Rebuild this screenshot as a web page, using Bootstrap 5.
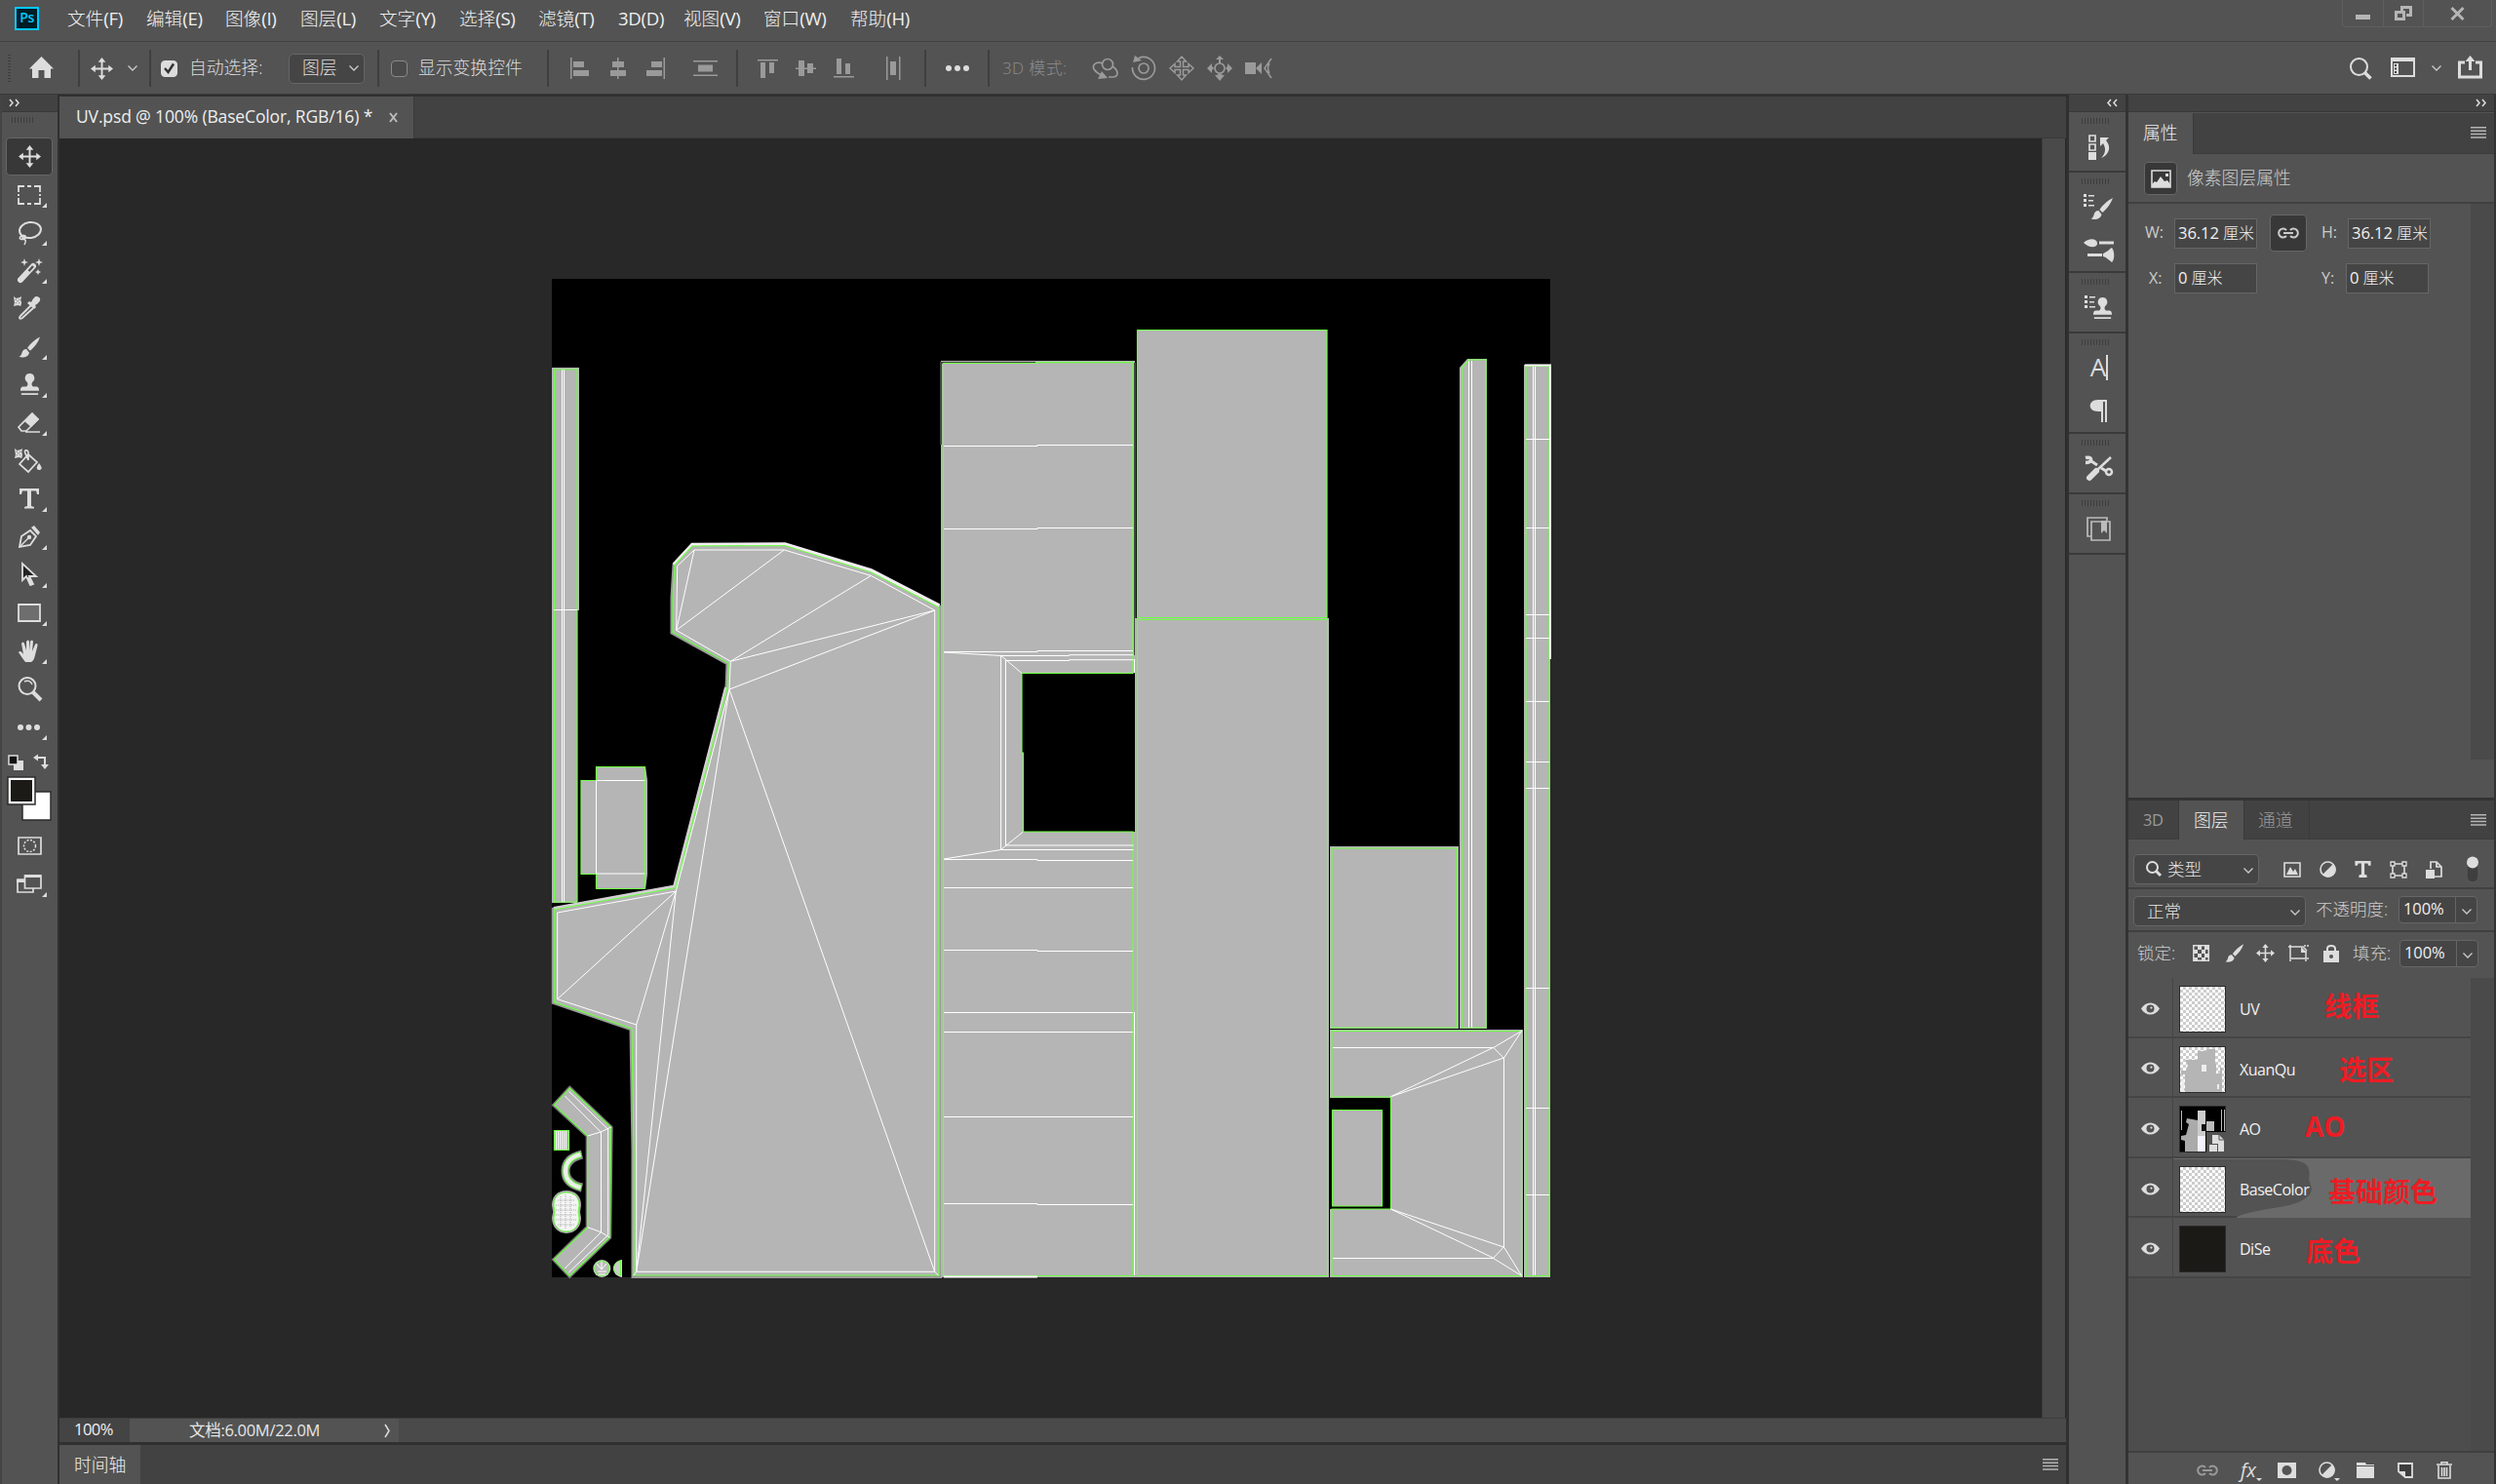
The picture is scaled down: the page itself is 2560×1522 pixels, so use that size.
<!DOCTYPE html>
<html lang="zh-CN">
<head>
<meta charset="utf-8">
<title>UV.psd</title>
<link href="https://cdn.jsdelivr.net/npm/bootstrap@5.3.0/dist/css/bootstrap.min.css" rel="stylesheet">
<style>
body{width:2560px;height:1522px;overflow:hidden;background:#535353;color:#e6e6e6;font:400 18px/1.2 "Open Sans","Noto Sans CJK SC",sans-serif}
svg{display:block;flex:none;overflow:visible;fill:#ddd}
.ln{fill:none;stroke:#ddd}
.ln:not([stroke-width]){stroke-width:2}
.menus{height:43px;border-bottom:1px solid #404040;padding-left:15px}
.menu-grid{display:grid;grid-template-columns:81px 81px 77px 81px 82px 81px 82px 67px 82px 89px 80px;margin-left:24px;padding-left:5px;font-size:18.6px;line-height:38px;white-space:nowrap;color:#f0f0f0;font-weight:300}
.menu-grid i{font-style:normal;font-weight:400;letter-spacing:-.3px}
.pslogo{width:25px;height:24px;margin-top:7px;border:2px solid #00c8ff;background:#001d26;color:#00c8ff;font-size:14px;font-weight:600;line-height:17px;letter-spacing:-.5px;text-align:center}
.winbtns{height:28px;margin-right:4px;border:1px solid #5f5f5f;border-top:0;border-radius:0 0 4px 4px}
.winbtns>span{display:flex;justify-content:center;align-items:center;width:41px}
.winbtns>span+span{border-left:1px solid #5f5f5f}
.winbtns>span:last-child{width:70px}
.opts{height:54px;border-bottom:1px solid #3a3a3a}
.ogrp{display:flex;align-items:center;height:54px;position:relative;font-size:17.8px;color:#ddd;font-weight:300;white-space:nowrap}
.ogrp::after{content:"";position:absolute;right:0;top:8px;height:38px;width:2px;background:#3f3f3f}
.ogrp.last::after{display:none}
.dim svg{fill:#9a9a9a}.dim .ln{stroke:#9a9a9a}
.psel{display:flex;align-items:center;justify-content:space-between;background:#454545;border:1px solid #666;border-radius:5px}
.cb{width:17px;height:17px;border-radius:4px;border:1.5px solid #8a8a8a;background:#4b4b4b}
.cb.on{background:#ddd;border-color:#ddd}
.main{height:1425px}
.tools{width:59px;border-left:2px solid #444;background:#535353}
.hd{height:18px;background:#424242;border-bottom:1px solid #383838}
.grip{height:6px;width:28px;background:repeating-linear-gradient(90deg,#3e3e3e 0 1px,transparent 1px 3px)}
.tool{height:39px;width:48px;display:flex;align-items:center;justify-content:center;position:relative;border:1px solid transparent;border-radius:4px}
.tool.on{background:#383838;border-color:#666}
.tool.more::after{content:"";position:absolute;right:5px;bottom:5px;border-left:5px solid transparent;border-bottom:5px solid #ddd}
.doccol{width:2063px;border-left:2px solid #303030;border-right:3px solid #303030}
.tabs{height:45px;background:#424242;border-top:2px solid #303030;border-bottom:1px solid #393939}
.doctab{width:364px;padding-left:17px;height:43px;background:#535353;border-right:1px solid #3a3a3a;font-size:17.5px;line-height:41px;letter-spacing:-.14px;white-space:nowrap;color:#eee}
.stage{height:1312px;background:#282828}
.paper{margin:144px 0 0 505px;width:1024px;height:1024px}
.vbar{width:24px;background:#4a4a4a;border-left:1px solid #3c3c3c}
.status{height:27px;background:#4a4a4a;border-top:1px solid #3c3c3c;border-bottom:2px solid #303030;font-size:16.5px;line-height:22px}
.tl{height:41px;background:#424242;border-top:1px solid #303030}
.dock{width:61px;border-right:3px solid #333}
.dgrp{border-bottom:2px solid #3a3a3a;display:flex;flex-direction:column;align-items:center;padding:6px 0 0 4px}
.dgrp .cell{height:43px;display:flex;align-items:center}
.dgrp .grip{margin-left:-8px}
.pan{width:377px;border-right:2px solid #333}
.ptabs{height:42px;background:#424242;border-bottom:1px solid #3c3c3c;line-height:40px;font-size:17.8px;color:#9a9a9a;font-weight:300}
.ptabs>span{border-right:1px solid #3a3a3a}
.ptabs .act{background:#535353;color:#f0f0f0;height:42px}
.inp{height:31px;border:1px solid #666;background:#454545;line-height:27px;padding-left:3px;font-size:16.6px;color:#f0f0f0;width:85px;white-space:nowrap;letter-spacing:-.1px}
.inp i{font-style:normal;font-weight:300;font-size:16px}
.lb{color:#ccc;font-size:16px}
.boxbtn{background:#383838;border:1px solid #666;border-radius:4px;display:flex;align-items:center;justify-content:center}
.combo{width:81px;height:28px;border:1px solid #666;border-radius:4px;background:#454545;font-size:16.5px;line-height:24px;display:flex;color:#f0f0f0;letter-spacing:-.1px}
.combo b{font-weight:400;width:58px;padding-left:4px;border-right:1px solid #666}
.combo svg{margin:12px 0 0 6px}
.lrow{height:61.6px;border-bottom:2px solid #454545;font-size:16px;letter-spacing:-.5px;color:#f0f0f0;background:#535353}
.picked{position:relative}
.picked>*{z-index:1}
.picked>.paint{position:absolute;z-index:0;left:45px;top:0}
.eyec{width:46px;padding-top:3px;border-right:1px solid #454545;display:flex;justify-content:center;align-items:center}
.thumb{width:48px;height:48px;border:1px solid #2b2b2b;margin:8px 14px 0 6px}
.lname{line-height:64px;white-space:nowrap}
.red{color:#ed1c24;font-size:28px;font-weight:700;letter-spacing:0;white-space:nowrap;line-height:59px}
.g{fill:#b5b5b5;stroke:#6fff45;stroke-width:1.2}
.h{fill:#b5b5b5;stroke:none}
.w{fill:none;stroke:#fff;stroke-width:1}
</style>
<script src="https://cdn.jsdelivr.net/npm/bootstrap@5.3.0/dist/js/bootstrap.bundle.min.js"></script>
</head>
<body>
<svg width="0" height="0" class="position-absolute"><defs>
<symbol id="chev" viewBox="0 0 10 6"><path d="M.5.5 5 5 9.500.5" fill="none" stroke="#ccc" stroke-width="1.3"/></symbol>
<symbol id="mv" viewBox="0 0 24 24"><path d="M11 5h2v6h6V8l5 4-5 4v-3h-6v6h3l-4 5-4-5h3v-6H5v3l-5-4 5-4v3h6V5H8l4-5 4 5z"/></symbol>
<symbol id="brush" viewBox="0 0 24 24"><path d="M23 1C17 4 12 9 9.500 13l3 3C17 12 21 7 23 1zM8.500 14c-3 0-4.500 2-5 4.500-.4 2-1.500 3-3 4 4 1.200 10 .5 11-4.500z"/></symbol>
<symbol id="stamp" viewBox="0 0 24 24"><path d="M12 0a5 5 0 0 0-3 9c1.500 1.500 1 4-.5 5H5c-2 0-3 1.500-3 4.500h20c0-3-1-4.500-3-4.500h-3.500c-1.500-1-2-3.500-.5-5A5 5 0 0 0 12 0zM3 21h18v2H3z"/></symbol>
<symbol id="lst" viewBox="0 0 12 14"><path d="M0 0h3v3H0zM0 5h3v3H0zM0 10h3v3H0zM5 1h6v1.500H5zM5 6h5v1.500H5zM5 11h6v1.500H5z"/></symbol>
<symbol id="burger" viewBox="0 0 16 12"><path d="M0 0h16v1.500H0zM0 3.400h16v1.500H0zM0 6.800h16v1.500H0zM0 10.200h16v1.500H0z" fill="#b5b5b5"/></symbol>
<symbol id="eye" viewBox="0 0 20 13"><path d="M0 6.500C5-2 15-2 20 6.500 15 15 5 15 0 6.500z"/><circle cx="10" cy="6.500" r="4.200" fill="#535353"/><circle cx="11" cy="5.500" r="1.200"/></symbol>
<symbol id="half" viewBox="0 0 17 17"><circle cx="8.500" cy="8.500" r="7.500" fill="none" stroke="#ddd" stroke-width="1.600"/><path d="M14 3A7.800 7.800 0 1 1 3 14z"/></symbol>
<symbol id="link" viewBox="0 0 22 12"><path d="M9 3a4.500 4.500 0 1 0 0 6M13 3a4.500 4.500 0 1 1 0 6M6 6h10" fill="none" stroke="currentColor" stroke-width="2"/></symbol>
<symbol id="splash" viewBox="0 0 10 12"><path d="M0 0l3 2 4-1 2-1-1 4 1 3-1 4-3-1-5 1 1-4z"/><path d="M2 3h1v1H2zM4 5h1v1H4zM6 3h1v1H6zM2 7h1v1H2zM6 7h1v1H6z" fill="#444"/></symbol>
<pattern id="chk" width="6" height="6" patternUnits="userSpaceOnUse"><path fill="#fff" d="M0 0h6v6H0z"/><path fill="#ccc" d="M3 0h3v3H3zM0 3h3v3H0z"/></pattern>
</defs></svg>

<header class="menus d-flex">
 <div class="pslogo">Ps</div>
 <nav class="menu-grid me-auto"><span>文件<i>(F)</i></span><span>编辑<i>(E)</i></span><span>图像<i>(I)</i></span><span>图层<i>(L)</i></span><span>文字<i>(Y)</i></span><span>选择<i>(S)</i></span><span>滤镜<i>(T)</i></span><span><i>3D(D)</i></span><span>视图<i>(V)</i></span><span>窗口<i>(W)</i></span><span>帮助<i>(H)</i></span></nav>
 <div class="winbtns d-flex"><span><svg width="15" height="15"><path fill="#b5b5b5" d="M0 9h15v5H0z"/></svg></span><span><svg width="18" height="15"><g fill="none" stroke="#b5b5b5" stroke-width="3"><path d="M7.500 6V1.500h9v8H12M1.500 6.500h8v7h-8z"/></g></svg></span><span><svg width="15" height="12"><path d="M1.500 0 13.500 12M13.500 0 1.500 12" stroke="#b5b5b5" stroke-width="3"/></svg></span></div>
</header>

<section class="opts d-flex">
 <div class="ogrp" style="width:82px;padding-left:8px"><svg width="3" height="28"><path d="M1.500 0v28" stroke="#3c3c3c" stroke-width="3" stroke-dasharray="1 2"/></svg><svg class="ms-3" width="30" height="24" viewBox="-3 0 30 24"><path d="M12.500 0 0 12.500h3V22h6.500v-8h6v8H22v-9.500h3z"/></svg></div>
 <div class="ogrp" style="width:73px;padding-left:11px"><svg width="23" height="23"><use href="#mv"/></svg><svg style="margin-left:15px" width="10" height="6"><use href="#chev"/></svg></div>
 <div class="ogrp" style="width:234px;padding-left:10px"><span class="cb on"><svg width="14" height="14"><path d="M3 7l3.500 4L12 2.500" fill="none" stroke="#333" stroke-width="2.500"/></svg></span><span style="width:102px;margin-left:12px">自动选择:</span><span class="psel" style="width:78px;height:31px;padding:0 5px 0 13px">图层 <svg width="10" height="6"><use href="#chev"/></svg></span></div>
 <div class="ogrp" style="width:174px;padding-left:12px"><span class="cb"></span><span style="margin-left:11px">显示变换控件</span></div>
 <div class="ogrp dim" style="width:194px;padding-left:22px;gap:19px"><svg width="20" height="24"><path d="M0 1h1.500v22H0zM3 5h11v6H3zM3 14h16v6H3z"/></svg><svg width="20" height="24"><path d="M9 1h1.500v22H9zM4 5h12v6H4zM2 14h16v6H2z"/></svg><svg width="20" height="24"><path d="M17.500 1H19v22h-1.500zM5 5h11v6H5zM0 14h16v6H0z"/></svg><svg style="margin-left:9px" width="25" height="24"><path d="M0 4h25v1.500H0zM5 8.500h15v7H5zM0 18.500h25V20H0z"/></svg></div>
 <div class="ogrp dim" style="width:193px;padding-left:20px;gap:19px"><svg width="20" height="24"><path d="M0 3h21v1.500H0zM3 6h5v16H3zM12 6h5v11h-5z"/></svg><svg width="20" height="24"><path d="M0 11.500h21V13H0zM3 4h6v16H3zM12 7h6v10h-6z"/></svg><svg width="20" height="24"><path d="M0 20h21v1.500H0zM3 2h5v16H3zM12 7h5v11h-5z"/></svg><svg style="margin-left:15px" width="16" height="24"><path d="M0 0h1.500v24H0zM13 0h1.500v24H13zM4 5h6v14H4z"/></svg></div>
 <div class="ogrp" style="width:65px;padding-left:20px"><svg width="24" height="6"><circle cx="3" cy="3" r="3"/><circle cx="12" cy="3" r="3"/><circle cx="21" cy="3" r="3"/></svg></div>
 <div class="ogrp dim last" style="padding-left:13px;color:#8c8c8c"><span style="width:93px;font-size:17px;letter-spacing:.4px">3D 模式:</span>
 <div class="d-flex" style="gap:13px"><svg width="26" height="26"><g class="ln" stroke-width="1.700"><circle cx="15" cy="9" r="5.500"/><path d="M10 8C3 5-1 10 1 14c2 3 5 5 8 6M20 11c6 4 7 10 1 11h-5"/></g><path d="M5 24l4-8 6 7z"/></svg><svg width="26" height="26"><g class="ln" stroke-width="1.700"><circle cx="13" cy="13" r="5"/><path d="M8 2.500A11.500 11.500 0 1 1 1.500 12"/></g><path d="M2 7l2-7 7 5z"/></svg><svg width="26" height="26" viewBox="-1 -1 26 26"><path fill="none" stroke="#9a9a9a" stroke-width="1.500" d="M10.500 5h-3L12 0l4.500 5h-3v5.500H19v-3l5 4.500-5 4.500v-3h-5.500V19h3L12 24l-4.500-5h3v-5.500H5v3L0 12l5-4.500v3h5.500z"/></svg><svg width="26" height="26"><circle class="ln" stroke-width="1.700" cx="13" cy="13" r="5"/><path d="M13 0l4 4h-3v4h-2V4H9zM13 26l5-6h-2l-3-2-3 2H8zM0 13l5-5v3l2 2-2 2v3zM26 13l-5-5v3l-2 2 2 2v3z"/></svg><svg width="28" height="26"><path d="M0 7h11v12H0zM11 13l6-6v12z"/><path class="ln" stroke-width="1.500" d="M27 3l-7 10 7 10M25 8q-3 5 0 10"/></svg></div></div>
 <div class="d-flex align-items-center ms-auto" style="padding-right:13px"><svg width="22" height="22"><circle class="ln" cx="9.500" cy="9.500" r="8.500"/><path class="ln" d="M15.500 15.500l6 6" stroke-width="3.500"/></svg><svg style="margin-left:20px" width="26" height="21"><path class="ln" d="M1 1h23v18H1z"/><path d="M0 0h25v4H0zM3 6h5v11H3z"/><path d="M5 7v9" stroke="#444" stroke-width="2" stroke-dasharray="2 1.500"/></svg><svg style="margin:0 17px 0 16px" width="10" height="6"><use href="#chev"/></svg><svg width="26" height="25"><path d="M7 7H1.500v15h22V7H18" fill="none" stroke="#ddd" stroke-width="3"/><path d="M11 15V6H7.500l5-6 5 6H14v9z"/></svg></div>
</section>

<main class="main d-flex">
 <aside class="tools">
  <div class="hd d-flex align-items-center" style="padding-left:7px"><svg width="11" height="7"><path d="M1 0l3 3.500L1 7M7 0l3 3.500L7 7" fill="none" stroke="#ddd" stroke-width="1.500"/></svg></div>
  <div style="padding:5px 0 0 4px"><div class="grip" style="margin:0 0 15px 6px;width:22px"></div>
  <div class="tool on"><svg width="23" height="23"><use href="#mv"/></svg></div>
  <div class="tool more"><svg width="24" height="20"><path d="M1 7V1h6M17 1h6v6M23 13v6h-6M7 19H1v-6M10 1h4M10 19h4M1 9v2M23 9v2" fill="none" stroke="#ddd" stroke-width="1.800"/></svg></div>
  <div class="tool more"><svg width="24" height="24"><ellipse class="ln" cx="13" cy="9" rx="11" ry="8" transform="rotate(-8 13 9)"/><path class="ln" stroke-width="1.500" d="M4 15c-5 3 2 5 4 2s-5-4-3 0c4 2 4 3 2 7"/></svg></div>
  <div class="tool more"><svg width="28" height="26"><path class="ln" d="M5 22 18 8" stroke-width="6" stroke-linecap="round"/><path d="M13.500 13l4.500-5" stroke="#535353" stroke-width="2.500"/><path d="M9 0l1 3 3 1-3 1-1 3-1-3-3-1 3-1zM24 0l1 3 3 1-3 1-1 3-1-3-3-1 3-1zM23 11l1 2 2 1-2 1-1 2-1-2-2-1 2-1z"/></svg></div>
  <div class="tool"><svg width="28" height="25" style="margin-left:-4px"><svg width="9" height="11"><use href="#splash"/></svg><path class="ln" d="M18 9 7 20c-2 2-1 4 2 2L20 12" stroke-width="1.800"/><path d="M14 7l2-2 2 1c3-6 5-7 8-5s0 6-4 8l1 2-2 2z"/></svg></div>
  <div class="tool more"><svg width="23" height="24"><use href="#brush"/></svg></div>
  <div class="tool more"><svg width="23" height="23"><use href="#stamp"/></svg></div>
  <div class="tool more"><svg width="24" height="22"><path class="ln" stroke-width="1.700" d="M1 15 15 1l6 6L9 19H4zM8 20h15"/><path d="M7 9 15 1l7 6-8 8z"/></svg></div>
  <div class="tool"><svg width="28" height="26" style="margin-left:-2px"><svg width="9" height="11"><use href="#splash"/></svg><path class="ln" stroke-width="1.700" d="M14 6 23 14 14 24 5 16zM14 12V4c-1-4-5-2-3 1l3 7"/><path d="M25 15c4 5 3 7 0 7s-3-3 0-7z"/></svg></div>
  <div class="tool more"><svg width="22" height="21"><path d="M1 0h20v6h-2l-1-3.500h-5V18l3 1v1.500H6V19l3-1V2.500H4L3 6H1z"/></svg></div>
  <div class="tool more"><svg width="23" height="23"><path class="ln" stroke-width="1.800" d="M1 22 3 11l9-6 6 6-6 9z"/><path d="M13 2l3-2 6 7-2 3z"/><path class="ln" stroke-width="1.500" d="M1 22l9-9"/><circle cx="11" cy="12" r="2.200"/></svg></div>
  <div class="tool more"><svg width="18" height="25"><path d="M2 1v17l4-4 4 9 3-1-4-8h7z" fill="#222" stroke="#ddd" stroke-width="1.800"/><path d="M8 15l4 8" stroke="#ddd" stroke-width="3"/></svg></div>
  <div class="tool more"><svg width="24" height="19"><path d="M1 1h22v17H1z" fill="#6e6e6e" stroke="#ddd" stroke-width="1.800"/></svg></div>
  <div class="tool more"><svg width="22" height="24"><path d="M7 23C4 19 2 16 0 13c1-2 3-1 5 2L3 4c1-2 2-2 3 0l2 7V2c1-2 2.500-2 3 0v9l1-9c1-2 2.500-1.500 3 0l-1 10 3-7c1-2 3-1 2.500 1L17 16c-1 4-2 6-4 7z"/></svg></div>
  <div class="tool"><svg width="25" height="25"><circle class="ln" cx="10" cy="9.500" r="8.500"/><path class="ln" d="M7 5c4-2 7 0 8 3" stroke-width="1.500"/><path class="ln" d="M16 16l8 8" stroke-width="4"/></svg></div>
  <div class="tool more"><svg width="24" height="6"><circle cx="3" cy="3" r="3"/><circle cx="11.500" cy="3" r="3"/><circle cx="20" cy="3" r="3"/></svg></div>
  <div class="d-flex" style="padding:9px 0 0 2px;gap:10px"><svg width="16" height="16"><path d="M6 6h10v10H6z"/><path d="M1 1h9v9H1z" fill="#111" stroke="#ddd" stroke-width="1.500"/></svg><svg width="16" height="15"><path d="M3 3h9v8" class="ln"/><path d="M0 3l5-3.500v7zM12 15l-4-5h8z"/></svg></div>
  <svg style="margin:6px 0 0 1px" width="46" height="46"><path d="M16 16h29v29H16z" fill="#fff" stroke="#2c2c2c" stroke-width="1.500"/><path d="M1 1h28v28H1z" fill="#fff" stroke="#2c2c2c" stroke-width="1.500"/><path d="M4 4h22v22H4z" fill="#1c1a17"/></svg>
  <div class="tool" style="margin-top:6px"><svg width="25" height="19"><path class="ln" stroke-width="1.700" d="M1 1h23v17H1z"/><circle cx="12.500" cy="9.500" r="6" fill="none" stroke="#ddd" stroke-width="1.500" stroke-dasharray="2 1.500"/></svg></div>
  <div class="tool more"><svg width="26" height="20"><path class="ln" stroke-width="1.700" d="M8 5H1v13h16v-4M8.500 1H25v13H8.500z"/><path d="M8 0h17v3H8zM0 5h8v3H0z"/></svg></div>
  </div>
 </aside>

 <section class="doccol">
  <div class="tabs"><div class="doctab">UV.psd @ 100% (BaseColor, RGB/16) *<svg class="d-inline-block" style="margin:0 0 2px 17px" width="9" height="9"><path d="M1 0l7 9M8 0L1 9" stroke="#bbb" stroke-width="2"/></svg></div></div>
  <div class="stage d-flex"><div style="width:2033px">
  <svg class="paper" viewBox="0 0 1024 1024"><path d="M0 0h1024v1024H0z" fill="#000"/>
   <path class="h" d="M0 91h28v249h-2v300H0zM46 500h50l2 14v97l-2 15H46zM31 514h16v97H31z"/>
   <path class="g" d="M2.500 93h23.500v546H2.500zM30 514.500h15.500v-14h50v125h-50v-15H30z"/>
   <path class="w" d="M10.500 93v546M12.500 93v546M2 339.500h24M45.500 514v96h50M45.500 514.500h50"/>
   <path d="M144 274 239 273.500 327.500 301 397.500 337V1022.500H84V894L82 769 2.300 741.700V647L127 624.500 180 419 181 394 124 362.500V327L126 293.600z" fill="#b5b5b5" stroke="#9b9b9b" stroke-width="5"/>
   <path d="M125 293 144 272.500 239 272 327.500 299 397.500 335" fill="none" stroke="#f3edf3" stroke-width="3.500"/><path d="M2 646 126 623.500 179 419" fill="none" stroke="#d4d0d4" stroke-width="4"/>
   <path class="g" d="M144 274 239 273.500 327.500 301 397 337V1022H84V894L82 769 2.300 741.700V647L127 624.500 180 419 181 394 124 362.500V327L126 293.600z"/>
   <path class="w" d="M146 278H238.300L327.300 304.400 392.700 340V1018.300H86.700V765L5.700 738.700V650L127.300 628 182 421 183.300 392.300 127.700 360.400 128.700 294.500zL127.700 360.400 238.300 278M327.300 304.400 183.300 392.300 392.700 340 182 421 392.700 1018.300M182 421 86.700 1018.300 127.300 628 86.700 765M127.300 628 5.700 738.700M392.700 1018.300l4 4M86.700 1018.300l-3 4"/>
   <path class="h" d="M399 84h199v320h-2v160h2v460H399z"/><path d="M482 405h116v162H483v-81h-1.500z" fill="#000"/>
   <path d="M399 170v-84h97M598 86v300" stroke="#454545" stroke-width="2" fill="none"/>
   <path d="M401.500 1022.500V86.500H498v-.8h98V404.500H482V486h1.500V567h112.500V1022.500z" class="g"/>
   <path class="w" d="M402 171.500h96v-1h98M402 256.500h96v-1h98M402 382.500h96v-1h98M402 595.500h96v1h98M402 624.500h194M402 688.500h96v1h98M402 752.500h194M402 772.500h194M402 859.500h194M402 948.500h96v1h98M402 383l58.600 3.500V585.500L402 595M460.500 386.500h70v-.8h66M465.500 391.500h65v-.8h66M465.500 391v190h131M460.500 585.500h136M460.500 386.200 482 404.500M460.600 585.400 483 567.400"/>
   <path d="M598 390v14M598 752v270M402 1023.500h96" stroke="#fff" stroke-width="2"/>
   <path class="h" d="M598 348h199v676H598zM798 582h132v187H798zM931 91l8-9h20v687h-28zM997 88h27v936h-27zM798 770h198v254H798z"/>
   <path class="g" d="M600.500 52.500h194.500v295H600.500zM600.500 349.500h195v673h-195zM800 584h128v184H800zM940.500 83H958v685H933.500V91.500zM999 89.500h24v933h-24z"/>
   <path d="M798 840h63v114h-63z" fill="#000"/><path class="g" d="M800 771.500h194.500v251H800V954h60.500V839H800zM800.500 852.500h51v98.500h-51z"/>
   <path class="w" d="M940.500 84v684M943.500 84v684M1006.500 90v932M1008.500 90v932M999 164.500h24M999 255.500h24M999 344.500h24M999 368.500h24M999 433.500h24M999 495.500h24M999 522.500h24M999 727.500h24M999 850.500h24M999 939.500h24M801 788.500H965.700L994.700 771.300 976.500 799V993L994.700 1022.500 965.700 1004.500H801M965.700 788.300 976.200 799 860.400 838.800zM860.400 954 976.200 993 965.700 1004.200z"/>
   <path d="M998 88.500h26V390" stroke="#fff" stroke-width="2" fill="none"/>
   <path d="M18.300 830 60.700 870.300 59.300 983 18.300 1022.700 2.300 1005.700 36.700 972.700V879L2.300 847.300z" fill="#b5b5b5" stroke="#777" stroke-width="4"/>
   <path class="g" d="M18.300 830 60.700 870.300 59.300 983 18.300 1022.700 2.300 1005.700 36.700 972.700V879L2.300 847.300z"/>
   <path class="w" d="M17.300 833 57.700 872.300V980.700L17.300 1019M13.300 838 50.500 875.300V977.700L13.300 1015M36.700 879 50 875 60.700 870M36.700 972.700 50.300 977.700 59.300 983"/>
   <path class="g" d="M2.500 873.500h15v20h-15z"/><path class="w" d="M4.500 874v19M6.500 874v19M8.500 874v19M10.500 874v19M12.500 874v19M14.500 874v19"/>
   <path d="M31 898q-17 4-17 17t17 17" fill="none" stroke="#888" stroke-width="9"/><path d="M30 898q-16 4-16 17t16 17" fill="none" stroke="#6fff45" stroke-width="6"/><path d="M29.500 898q-15.500 4-15.500 17t15.500 17" fill="none" stroke="#eee" stroke-width="4"/>
   <path d="M15 937c9 0 13 6 13 13l-1 7 1 6c0 8-5 14-13 14s-13-6-13-14l1-6-1-7c0-7 4-13 13-13z" fill="#fff" stroke="#aaa" stroke-width="4"/><path d="M15 937c9 0 13 6 13 13l-1 7 1 6c0 8-5 14-13 14s-13-6-13-14l1-6-1-7c0-7 4-13 13-13z" fill="#f4f4f4" stroke="#6fff45"/>
   <path d="M6 945h18M4 950h22M4 955h22M4 960h22M4 965h22M6 970h18M9 941v32M14 939v36M19 941v32" stroke="#aaa" stroke-width="1" stroke-dasharray="1 1"/>
   <circle cx="51.300" cy="1015" r="9" fill="#ccc"/><circle cx="51.300" cy="1015" r="7.500" fill="#bbb" stroke="#6fff45"/><path class="w" d="M51 1016l-5-6M51 1016V1008M51 1016l5-6M47 1018h9M48 1021h7" stroke-width="1.500"/>
   <path d="M72 1006v18c-12-2-12-16 0-18z" fill="#ddd"/><path d="M70.500 1007v15c-9-2-9-13 0-15z" fill="#ccc" stroke="#6fff45"/>
  </svg></div><div class="vbar"></div></div>
  <div class="status d-flex"><span style="width:72px;padding-left:15px;background:#444;font-size:16.5px;letter-spacing:-.5px;color:#f0f0f0">100%</span><span class="d-flex align-items-center" style="width:276px;padding-left:61px;background:#535353;letter-spacing:-.3px">文档:6.00M/22.0M<svg class="ms-auto" style="margin-right:9px" width="6" height="13"><path d="M1 0l4 6.500L1 13" fill="none" stroke="#ddd" stroke-width="1.500"/></svg></span></div>
  <div class="tl d-flex justify-content-between"><span style="width:83px;background:#535353;line-height:40px;padding-left:15px;font-weight:300;font-size:17.800px;color:#f0f0f0">时间轴</span><svg style="margin:14px 8px 0 0" width="16" height="12"><use href="#burger"/></svg></div>
 </section>

 <aside class="dock">
  <div class="hd d-flex align-items-center justify-content-end" style="padding-right:8px"><svg width="11" height="7"><path d="M4 0L1 3.500 4 7M10 0L7 3.500 10 7" fill="none" stroke="#ddd" stroke-width="1.500"/></svg></div>
  <div class="dgrp" style="height:62px"><div class="grip"></div><div class="cell" style="height:48px"><svg width="22" height="27"><path class="ln" stroke-width="1.700" d="M1 1h6v6H1zM1 10h6v6H1z"/><path d="M0 18h8v8H0zM12 3h9l-3 3c6 7 3 15-5 18 5-5 5-10 2-15l-3 3z"/></svg></div></div>
  <div class="dgrp" style="height:103px"><div class="grip"></div><div class="cell" style="height:46px"><svg width="32" height="26"><svg width="12" height="14"><use href="#lst"/></svg><svg x="6" y="3" width="26" height="24"><use href="#brush"/></svg></svg></div><div class="cell"><svg width="32" height="25"><path d="M0 5c5-5 13-5 14 0s-8 6-14 0zM16 3.500h15v3H16zM4 16h15v3H4zM20 16c5-2 7-5 9-6 3 4 3 12 0 15-3-2-5-5-9-6z"/></svg></div></div>
  <div class="dgrp" style="height:62px"><div class="grip"></div><div class="cell" style="height:49px"><svg width="30" height="26"><svg width="12" height="14"><use href="#lst"/></svg><svg x="7" y="1" width="23" height="25"><use href="#stamp"/></svg></svg></div></div>
  <div class="dgrp" style="height:103px"><div class="grip"></div><div class="cell" style="height:46px;font-size:26px;color:#ddd">A<svg width="2" height="26"><path d="M0 0h2v26H0z"/></svg></div><div class="cell"><svg width="18" height="23"><path d="M17 0v23h-2V2h-2v21h-2V12H8C-3 12-3 0 8 0z"/></svg></div></div>
  <div class="dgrp" style="height:62px"><div class="grip"></div><div class="cell" style="height:50px"><svg width="30" height="27"><path class="ln" d="M5 23 12 16" stroke-width="6" stroke-linecap="round"/><path class="ln" d="M13 15 27 2" stroke-width="2.500"/><path class="ln" d="M7 6l6 4M17 13l5 3" stroke-width="3"/><path class="ln" d="M1 2.500c7-2 8 5 0 5" stroke-width="3.500"/><circle class="ln" cx="25" cy="17" r="3" stroke-width="2.500"/></svg></div></div>
  <div class="dgrp" style="height:62px"><div class="grip"></div><div class="cell" style="height:47px"><svg width="26" height="26"><path d="M5 20H1V1h20v3M5 5h19v19H5z" fill="none" stroke="#bbb" stroke-width="1.700"/><path d="M15 4h6v13l-3-3-3 3z" fill="#bbb"/></svg></div></div>
 </aside>

 <aside class="pan">
  <div class="hd d-flex align-items-center justify-content-end" style="padding-right:8px"><svg width="11" height="7"><path d="M1 0l3 3.500L1 7M7 0l3 3.500L7 7" fill="none" stroke="#ddd" stroke-width="1.500"/></svg></div>
  <div class="ptabs d-flex" style="margin-top:1px"><span class="act" style="width:67px;padding-left:15px">属性</span><svg class="ms-auto" style="margin:14px 8px 0 0" width="16" height="12"><use href="#burger"/></svg></div>
  <div class="d-flex align-items-center" style="height:51px;border-bottom:2px solid #404040;padding:1px 0 0 16px"><span class="boxbtn" style="width:34px;height:34px"><svg width="21" height="19"><path class="ln" stroke-width="1.600" d="M1 1h19v17H1z"/><path d="M1 18v-3l3-3 2 1 4-6 4 5 3-1 3 4v3zM15 4h3v3h-3z"/></svg></span><span style="margin-left:10px;font-weight:300;color:#ccc;font-size:17.800px">像素图层属性</span></div>
  <div class="d-flex" style="height:570px">
   <div style="width:351px;padding:11px 0 0 17px">
    <div class="d-flex align-items-center" style="height:38px"><span class="lb" style="width:30px">W:</span><span class="inp">36.12 <i>厘米</i></span><span class="boxbtn" style="width:38px;height:38px;margin:0 15px 0 13px;color:#ccc"><svg width="22" height="12"><use href="#link"/></svg></span><span class="lb" style="width:27px">H:</span><span class="inp">36.12 <i>厘米</i></span></div>
    <div class="d-flex align-items-center" style="height:31px;margin-top:12px"><span class="lb" style="width:30px;padding-left:4px">X:</span><span class="inp">0 <i>厘米</i></span><span class="lb" style="width:25px;margin-left:66px">Y:</span><span class="inp">0 <i>厘米</i></span></div>
   </div><div style="width:24px;background:#4a4a4a"></div></div>
  <div style="height:41px;border-bottom:2px solid #333"></div>
  <div class="ptabs d-flex" style="border-top:1px solid #333;height:41px"><span style="width:52px;padding-left:15px;font-size:16.500px;letter-spacing:-.5px;font-weight:400">3D</span><span class="act" style="width:67px;padding-left:15px;height:40px">图层</span><span style="width:67px;padding-left:14px">通道</span><svg class="ms-auto" style="margin:14px 8px 0 0" width="16" height="12"><use href="#burger"/></svg></div>
  <div class="d-flex align-items-center" style="height:51px;border-bottom:2px solid #404040;padding:12px 0 0 5px"><span class="psel" style="width:129px;height:31px;padding:0 5px 1px 12px;font-weight:300;font-size:17.500px"><svg width="16" height="16"><circle class="ln" cx="6.500" cy="6.500" r="5.500"/><path class="ln" stroke-width="3" d="M10 10l5 5"/></svg><span class="me-auto" style="margin-left:6px">类型</span><svg style="margin-top:3px" width="10" height="6"><use href="#chev"/></svg></span>
   <div class="d-flex align-items-center" style="margin-left:25px;gap:19px"><svg width="18" height="16"><path class="ln" stroke-width="1.600" d="M1 1h16v14H1z"/><path d="M3 13l4-8 3 5 2-3 3 6z"/></svg><svg width="17" height="17"><use href="#half"/></svg><svg width="17" height="17" viewBox="2 0 18 21"><path d="M1 0h20v6h-3l-1-3h-4V17l3 1v3H6v-3l3-1V3H5L4 6H1z"/></svg><svg width="18" height="18"><path class="ln" stroke-width="1.600" d="M3 3h12v12H3z"/><path fill="#444" stroke="#ddd" stroke-width="1.300" d="M1 1h4v4H1zM13 1h4v4h-4zM1 13h4v4H1zM13 13h4v4h-4z"/></svg><svg width="17" height="18"><path class="ln" stroke-width="1.700" d="M5 8V1h6l5 5v10H9M11 1v5h5"/><path d="M0 9h9v9H0z"/></svg></div><svg style="margin:0 0 0 24px" width="14" height="28"><rect x="1" y="1" width="12" height="26" rx="6" fill="#3f3f3f" stroke="#5c5c5c"/><circle cx="7" cy="6.500" r="6"/></svg></div>
  <div class="d-flex align-items-center" style="height:44px;border-bottom:2px solid #404040;padding:2px 0 0 5px"><span class="psel" style="width:177px;height:31px;padding:0 5px 0 13px;font-weight:300;font-size:17.500px">正常<svg style="margin-top:3px" width="10" height="6"><use href="#chev"/></svg></span><span style="width:84px;padding-left:10px;font-weight:300;color:#ccc;font-size:17.500px;margin-top:-3px;white-space:nowrap">不透明度:</span><span class="combo" style="margin:-2px 0 0 11px"><b>100%</b><svg width="10" height="6"><use href="#chev"/></svg></span></div>
  <div class="d-flex align-items-center" style="height:47px;padding:0 0 4px 9px"><span style="width:57px;font-weight:300;color:#ccc;font-size:17.500px">锁定:</span>
   <svg width="17" height="17"><path class="ln" stroke-width="1.500" d="M.8.8h15.500v15.500H.8z"/><path d="M5 1h4v4H5zM12 1h4v4h-4zM1 5h4v4H1zM9 5h4v4H9zM5 9h4v4H5zM12 9h4v4h-4zM1 13h4v4H1zM9 13h4v4H9z"/></svg><svg style="margin-left:16px" width="20" height="21"><use href="#brush"/></svg><svg style="margin-left:12px" width="19" height="19"><use href="#mv"/></svg><svg style="margin-left:14px" width="21" height="17"><path class="ln" stroke-width="1.500" d="M0 2h15l4 4M2 0v14h19M18 6v8"/><path d="M13 2l6 6h-6z"/><path d="M16 1h5M2 17v-2M18 17v-2" stroke="#ddd" stroke-width="1.500" stroke-dasharray="2 1"/></svg><svg style="margin-left:15px" width="16" height="18"><path class="ln" d="M4 7V4c0-4 8-4 8 0v3"/><path d="M0 6h16v12H0z"/><circle cx="8" cy="12" r="2" fill="#535353"/></svg>
   <span style="width:48px;margin:0 0 0 14px;font-weight:300;color:#ccc;font-size:17.500px;white-space:nowrap">填充:</span><span class="combo"><b>100%</b><svg width="10" height="6"><use href="#chev"/></svg></span></div>
  <div class="d-flex" style="height:485px;background:#4d4d4d">
   <div style="width:351px">
    <div class="lrow d-flex"><span class="eyec"><svg width="19" height="13"><use href="#eye"/></svg></span><svg class="thumb"><path d="M0 0h46v46H0z" fill="url(#chk)"/></svg><span class="lname" style="width:87px">UV</span><span class="red">线框</span></div>
    <div class="lrow d-flex"><span class="eyec"><svg width="19" height="13"><use href="#eye"/></svg></span><svg class="thumb"><path d="M0 0h46v46H0z" fill="url(#chk)"/><path d="M6 13h12V4h9V2h9v15h1v10h4v-6h2v25H5V28H1v-4h5l2-6-2-3z" fill="#b5b5b5"/><path d="M22 18h5v7h-5zM1 34h3v12H1zM38 38h2v5h-2z" fill="#eee"/></svg><span class="lname" style="width:102px">XuanQu</span><span class="red" style="line-height:64px">选区</span></div>
    <div class="lrow d-flex"><span class="eyec"><svg width="19" height="13"><use href="#eye"/></svg></span><svg class="thumb"><path d="M0 0h46v46H0z"  fill="#000"/><path d="M7 12l11 2v32H5V35l-4-1v-4l5-1 3-11-3-2z" fill="#aaa"/><path d="M18 4h8v42h-8z" fill="#ccc"/><path d="M18 30h8v16h-8z" fill="#f3f3ff"/><path d="M27 15h8v10h-8zM1 4h1v20H1zM42 3h1v22h-1zM45 3h1v22h-1z" fill="#bbb"/><path d="M22 18h5v7h-5z" fill="#111"/><path d="M27 26h20v21H27z" fill="#535353"/><path d="M33 29h7l5 5v12h-6v-8h-6zM30 39h8v7h-8z"/><path d="M40 29v5h5" fill="none" stroke="#535353"/></svg><span class="lname" style="width:67px">AO</span><span class="red" style="line-height:59px">AO</span></div>
    <div class="lrow d-flex picked"><svg class="paint" width="306" height="61"><path d="M0 0h306v61H66v-1C90 50 120 52 135 42c12-7 7-15 5-20C143 5 135 2 115 1H0z" fill="#6a6a6a"/></svg><span class="eyec"><svg width="19" height="13"><use href="#eye"/></svg></span><svg class="thumb"><path d="M0 0h46v46H0z" fill="url(#chk)"/></svg><span class="lname" style="width:91px">BaseColor</span><span class="red" style="line-height:69px">基础颜色</span></div>
    <div class="lrow d-flex"><span class="eyec"><svg width="19" height="13"><use href="#eye"/></svg></span><svg class="thumb"><path d="M0 0h46v46H0z" fill="#1c1a17"/></svg><span class="lname" style="width:68px">DiSe</span><span class="red" style="line-height:69px">底色</span></div>
   </div><div style="width:24px;background:#4a4a4a"></div></div>
  <div class="d-flex align-items-center" style="height:33px;border-top:2px solid #404040;padding:4px 0 0 70px"><svg style="color:#999" width="22" height="12"><use href="#link"/></svg><span style="width:61px;padding-left:23px;font:italic 20px/22px 'Open Sans',sans-serif;color:#ddd;display:flex;align-items:flex-end">fx<svg width="6" height="3"><path d="M0 0h6L3 3z"/></svg></span><svg width="19" height="16"><path d="M0 0h19v16H0z"/><circle cx="9.500" cy="8" r="5" fill="#535353"/></svg><svg style="margin-left:23px" width="17" height="17"><use href="#half"/><path d="M16 17h6l-3 3z"/></svg><svg style="margin-left:22px" width="18" height="16"><path d="M0 0h9l1 2h8v1H0zM0 4h18v12H0z"/></svg><svg style="margin-left:24px" width="16" height="16"><path d="M1 1h14v14H8L1 9z" fill="#3d3d3d" stroke="#ddd" stroke-width="1.800"/><path d="M1 9h7v6z"/></svg><svg style="margin-left:24px" width="16" height="18"><path class="ln" stroke-width="1.600" d="M0 3h16M5 3V.8h6V3M2 4v13h12V4M5.500 6v9M8 6v9M10.500 6v9"/></svg></div>
 </aside>
</main>
</body>
</html>
